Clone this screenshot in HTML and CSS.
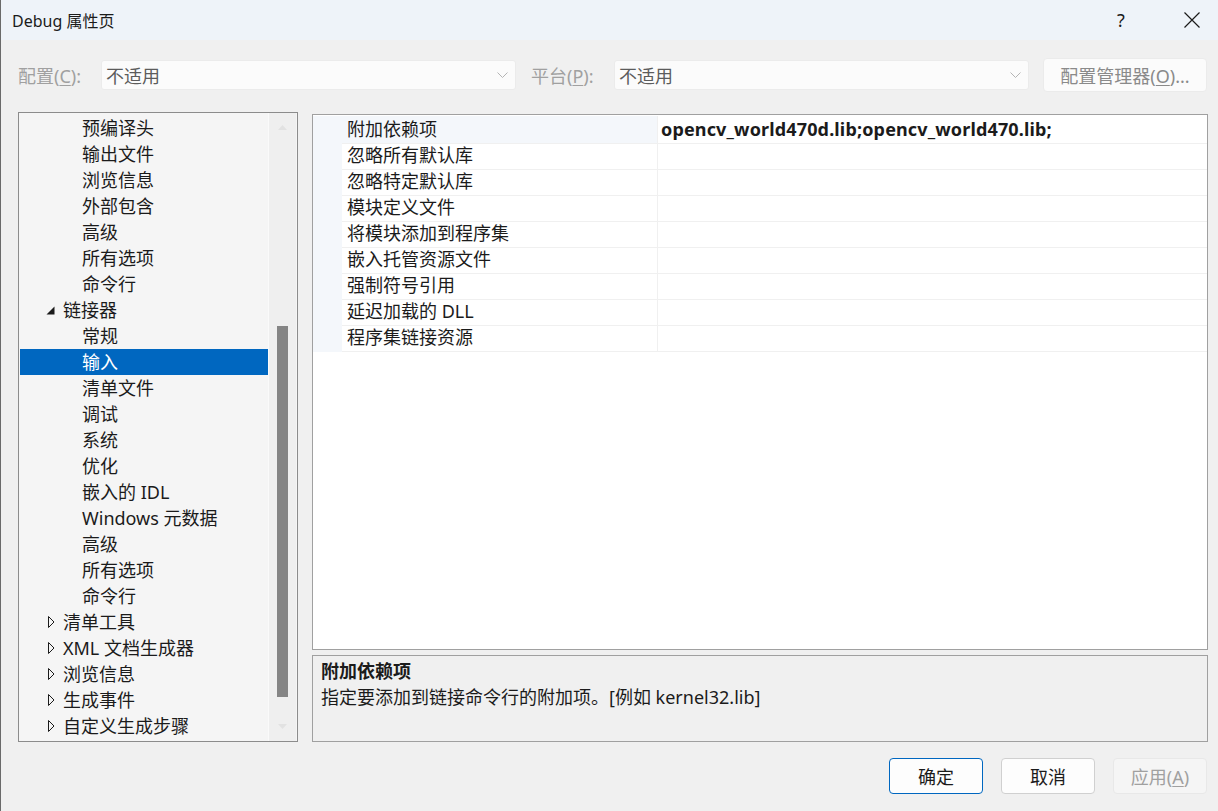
FILE: index.html
```html
<!DOCTYPE html>
<html lang="zh-CN">
<head>
    <meta charset="UTF-8">
    <title>Debug 属性页</title>
    <link rel="stylesheet" href="styles.css">
</head>
<body>
<div class="window">

    <div class="titlebar">
        <span class="title">Debug 属性页</span>
        <span class="tb-help">?</span>
        <span class="tb-close">
            <svg width="16" height="16" viewBox="0 0 16 16"><path d="M0.5 0.5 L15.5 15.5 M15.5 0.5 L0.5 15.5" stroke="#1b1b1b" stroke-width="1.2" fill="none"/></svg>
        </span>
    </div>

    <!-- 配置 / 平台 -->
    <div class="toolbar">
        <span class="lbl">配置(<u>C</u>):</span>
        <div class="combo">
            <span>不适用</span>
            <svg width="11" height="6" viewBox="0 0 11 6"><polyline points="0.5,0.5 5.5,5.5 10.5,0.5" stroke="#b4b4b4" fill="none"/></svg>
        </div>
        <span class="lbl lbl-plat">平台(<u>P</u>):</span>
        <div class="combo">
            <span>不适用</span>
            <svg width="11" height="6" viewBox="0 0 11 6"><polyline points="0.5,0.5 5.5,5.5 10.5,0.5" stroke="#b4b4b4" fill="none"/></svg>
        </div>
        <button class="btn-mgr">配置管理器(<u>O</u>)...</button>
    </div>

    <div class="main">
        <!-- 左侧树 -->
        <div class="tree">
            <div class="tree-list">
                <div class="row lvl2">预编译头</div>
                <div class="row lvl2">输出文件</div>
                <div class="row lvl2">浏览信息</div>
                <div class="row lvl2">外部包含</div>
                <div class="row lvl2">高级</div>
                <div class="row lvl2">所有选项</div>
                <div class="row lvl2">命令行</div>
                <div class="row lvl1"><span class="caret"><svg width="9" height="9" viewBox="0 0 9 9"><polygon points="8.5,0.5 8.5,8.5 0.5,8.5" fill="#1b1b1b"/></svg></span>链接器</div>
                <div class="row lvl2">常规</div>
                <div class="row lvl2 selected">输入</div>
                <div class="row lvl2">清单文件</div>
                <div class="row lvl2">调试</div>
                <div class="row lvl2">系统</div>
                <div class="row lvl2">优化</div>
                <div class="row lvl2">嵌入的 IDL</div>
                <div class="row lvl2">Windows 元数据</div>
                <div class="row lvl2">高级</div>
                <div class="row lvl2">所有选项</div>
                <div class="row lvl2">命令行</div>
                <div class="row lvl1"><span class="caret c-closed"><svg width="7" height="12" viewBox="0 0 7 12"><polygon points="0.5,0.5 6,6 0.5,11.5" stroke="#1b1b1b" fill="none"/></svg></span>清单工具</div>
                <div class="row lvl1"><span class="caret c-closed"><svg width="7" height="12" viewBox="0 0 7 12"><polygon points="0.5,0.5 6,6 0.5,11.5" stroke="#1b1b1b" fill="none"/></svg></span>XML 文档生成器</div>
                <div class="row lvl1"><span class="caret c-closed"><svg width="7" height="12" viewBox="0 0 7 12"><polygon points="0.5,0.5 6,6 0.5,11.5" stroke="#1b1b1b" fill="none"/></svg></span>浏览信息</div>
                <div class="row lvl1"><span class="caret c-closed"><svg width="7" height="12" viewBox="0 0 7 12"><polygon points="0.5,0.5 6,6 0.5,11.5" stroke="#1b1b1b" fill="none"/></svg></span>生成事件</div>
                <div class="row lvl1"><span class="caret c-closed"><svg width="7" height="12" viewBox="0 0 7 12"><polygon points="0.5,0.5 6,6 0.5,11.5" stroke="#1b1b1b" fill="none"/></svg></span>自定义生成步骤</div>
            </div>
            <div class="vscroll">
                <svg class="arr" width="9" height="5" viewBox="0 0 9 5"><polygon points="0,5 4.5,0 9,5" fill="#e2e2e2"/></svg>
                <div class="track"><div class="thumb"></div></div>
                <svg class="arr" width="9" height="5" viewBox="0 0 9 5"><polygon points="0,0 4.5,5 9,0" fill="#e2e2e2"/></svg>
            </div>
        </div>

        <div class="right">
            <!-- 属性网格 -->
            <div class="grid">
                <div class="prop current"><span class="gut"></span><span class="name">附加依赖项</span><span class="val">opencv_world470d.lib;opencv_world470.lib;</span></div>
                <div class="prop"><span class="gut"></span><span class="name">忽略所有默认库</span><span class="val"></span></div>
                <div class="prop"><span class="gut"></span><span class="name">忽略特定默认库</span><span class="val"></span></div>
                <div class="prop"><span class="gut"></span><span class="name">模块定义文件</span><span class="val"></span></div>
                <div class="prop"><span class="gut"></span><span class="name">将模块添加到程序集</span><span class="val"></span></div>
                <div class="prop"><span class="gut"></span><span class="name">嵌入托管资源文件</span><span class="val"></span></div>
                <div class="prop"><span class="gut"></span><span class="name">强制符号引用</span><span class="val"></span></div>
                <div class="prop"><span class="gut"></span><span class="name">延迟加载的 DLL</span><span class="val"></span></div>
                <div class="prop"><span class="gut"></span><span class="name">程序集链接资源</span><span class="val"></span></div>
            </div>
            <div class="desc">
                <div class="desc-title">附加依赖项</div>
                <div class="desc-text">指定要添加到链接命令行的附加项。[例如 kernel32.lib]</div>
            </div>
        </div>
    </div>

    <div class="footer">
        <button class="btn btn-ok">确定</button>
        <button class="btn">取消</button>
        <button class="btn btn-off">应用(<u>A</u>)</button>
    </div>

</div>
</body>
</html>
```

FILE: styles.css
```css
* { box-sizing: border-box; }
body { margin: 0; font-family: "Noto Sans", "Noto Sans CJK SC", sans-serif; font-size: 18px; color: #1b1b1b; }
u { text-decoration: underline; text-underline-offset: 2px; }

.window { width: 1218px; height: 811px; background: #f0f0f0; display: flex; flex-direction: column; border-left: 1px solid #6a6a6a; }

.titlebar { height: 40px; background: #eef3f9; display: flex; align-items: center; padding-left: 11px; }
.title { font-size: 16px; flex: 1; }
.tb-help { width: 46px; text-align: center; font-size: 18px; }
.tb-close { width: 46px; margin: 0 3px 0 25px; display: flex; justify-content: center; }

.toolbar { display: flex; align-items: center; height: 34px; margin-top: 18px; padding: 0 11px 0 17px; }
.lbl { color: #a0a0a0; width: 83px; }
.lbl-plat { margin-left: 15px; }
.combo { width: 415px; height: 30px; background: #fbfbfb; border: 1px solid #ebebeb; border-radius: 3px; display: flex; align-items: center; justify-content: space-between; padding: 0 7px 0 4px; color: #5c5c5c; }
.btn-mgr { margin-left: auto; width: 164px; height: 34px; font: inherit; color: #8a8a8a; background: #fbfbfb; border: 1px solid #ebebeb; border-radius: 4px; padding: 0; }

.main { display: flex; gap: 14px; height: 630px; margin-top: 20px; padding-left: 17px; }

.tree { width: 280px; border: 1px solid #8c8c8c; background: #f5f5f5; display: flex; padding-left: 1px; }
.tree-list { width: 249px; padding-top: 2px; border-right: 1px solid #fafafa; }
.row { height: 26px; line-height: 26px; display: flex; align-items: center; white-space: nowrap; }
.lvl1 { padding-left: 26px; }
.lvl2 { padding-left: 62px; }
.caret { width: 17px; display: flex; align-items: center; }
.c-closed { padding-left: 2px; }
.selected { background: #0067c0; color: #fff; }

.vscroll { width: 27px; background: #efefef; display: flex; flex-direction: column; align-items: center; padding: 12px 0 12px; }
.arr { flex: none; }
.track { flex: 1; width: 100%; display: flex; justify-content: center; }
.thumb { width: 11px; height: 371px; margin-top: 196px; background: #858585; }

.right { width: 896px; display: flex; flex-direction: column; gap: 5px; padding-top: 2px; }
.grid { flex: 1; background: #fff; border: 1px solid #a0a0a0; padding-top: 1px; }
.prop { display: grid; grid-template-columns: 29px 316px 1fr; height: 26px; }
.gut { background: #f4f7fb; }
.name, .val { border-bottom: 1px solid #f0f0f0; line-height: 27px; white-space: nowrap; }
.name { padding-left: 5px; border-right: 1px solid #f0f0f0; }
.current .name { background: #f4f7fb; }
.val { padding-left: 3px; font-weight: bold; font-size: 18px; letter-spacing: 0.15px; }

.desc { height: 87px; border: 1px solid #a0a0a0; background: #f0f0f0; padding: 2px 8px; }
.desc-title { font-weight: bold; line-height: 26px; }
.desc-text { line-height: 26px; }

.footer { display: flex; justify-content: flex-end; gap: 18px; padding: 16px 11px 0 0; }
.btn { width: 94px; height: 36px; font: inherit; color: #1b1b1b; background: #fdfdfd; border: 1px solid #d0d0d0; border-radius: 4px; padding: 0; }
.btn-ok { border-color: #0067c0; }
.btn-off { color: #a0a0a0; background: #f5f5f5; border-color: #e8e8e8; }
```
